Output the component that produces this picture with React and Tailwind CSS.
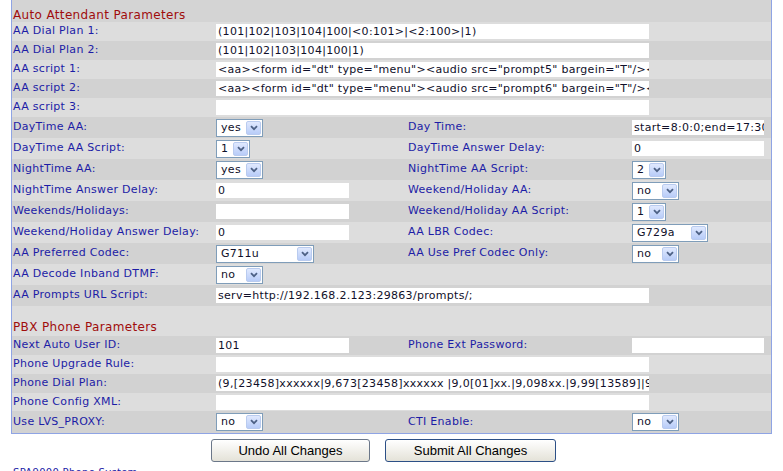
import React from 'react';

const LIGHT = 'bg-[#dddddd]';
const DARK = 'bg-[#d2d2d2]';

const Label = ({ children, right }) => (
    <div className={right ? 'w-[226px] shrink-0 pl-[2px] text-[#1c1ca6]' : 'w-[204px] shrink-0 pl-px text-[#1c1ca6]'}>
        {children}
    </div>
);

const Input = ({ value = '', w = 'w-[133px]' }) => (
    <div className={`h-[15px] ${w} shrink-0 overflow-hidden whitespace-nowrap bg-white pl-[2px] leading-[15px] text-[#10102a]`}>
        {value}
    </div>
);

const Select = ({ value, w }) => (
    <div className={`flex h-[18px] ${w} shrink-0 items-center border border-[#7f9db9] bg-white`}>
        <span className="flex-1 pl-[4px] leading-[16px] text-[#10102a]">{value}</span>
        <span className="mr-px flex h-[14px] w-[15px] items-center justify-center rounded-[2px] border border-[#b9cbef] bg-gradient-to-b from-[#e0e9fe] to-[#b8ccf8]">
            <svg width="8" height="6" viewBox="0 0 8 6">
                <path d="M1 1.2 L4 4.2 L7 1.2" fill="none" stroke="#4d6185" strokeWidth="1.8" />
            </svg>
        </span>
    </div>
);

const Row = ({ h, bg, children }) => (
    <div className={`flex items-center ${h} ${bg}`}>{children}</div>
);

const Cell = ({ children }) => <div className="w-[190px] shrink-0">{children}</div>;

export default function App() {
    return (
        <div className="w-[783px] bg-white font-['DejaVu_Sans','Verdana',sans-serif] text-[11px] tracking-[0.3px]">
            <div className="ml-[11px] w-[761px] border-x border-b border-[#8fa4e4]">
                {/* Auto Attendant section */}
                <div className="flex h-[22px] items-center pt-[7px] pl-px text-[12px] tracking-[0.35px] text-[#a00c0c] bg-[#d4d4d4]">
                    Auto Attendant Parameters
                </div>
                <Row h="h-[19px]" bg={LIGHT}>
                    <Label>AA Dial Plan 1:</Label>
                    <Input w="w-[433px]" value="(101|102|103|104|100|<0:101>|<2:100>|1)" />
                </Row>
                <Row h="h-[19px]" bg={DARK}>
                    <Label>AA Dial Plan 2:</Label>
                    <Input w="w-[433px]" value="(101|102|103|104|100|1)" />
                </Row>
                <Row h="h-[19px]" bg={LIGHT}>
                    <Label>AA script 1:</Label>
                    <Input w="w-[433px]" value={'<aa><form id="dt" type="menu"><audio src="prompt5" bargein="T"/><noinput timeout="10"/>'} />
                </Row>
                <Row h="h-[19px]" bg={DARK}>
                    <Label>AA script 2:</Label>
                    <Input w="w-[433px]" value={'<aa><form id="dt" type="menu"><audio src="prompt6" bargein="T"/><noinput timeout="10"/>'} />
                </Row>
                <Row h="h-[19px]" bg={LIGHT}>
                    <Label>AA script 3:</Label>
                    <Input w="w-[433px]" />
                </Row>

                <Row h="h-[21px]" bg={DARK}>
                    <Label>DayTime AA:</Label>
                    <Cell><Select value="yes" w="w-[47px]" /></Cell>
                    <Label right>Day Time:</Label>
                    <Input w="w-[132px]" value="start=8:0:0;end=17:30:0" />
                </Row>
                <Row h="h-[21px]" bg={LIGHT}>
                    <Label>DayTime AA Script:</Label>
                    <Cell><Select value="1" w="w-[34px]" /></Cell>
                    <Label right>DayTime Answer Delay:</Label>
                    <Input w="w-[132px]" value="0" />
                </Row>
                <Row h="h-[21px]" bg={DARK}>
                    <Label>NightTime AA:</Label>
                    <Cell><Select value="yes" w="w-[47px]" /></Cell>
                    <Label right>NightTime AA Script:</Label>
                    <Select value="2" w="w-[34px]" />
                </Row>
                <Row h="h-[21px]" bg={LIGHT}>
                    <Label>NightTime Answer Delay:</Label>
                    <Cell><Input value="0" /></Cell>
                    <Label right>Weekend/Holiday AA:</Label>
                    <Select value="no" w="w-[47px]" />
                </Row>
                <Row h="h-[21px]" bg={DARK}>
                    <Label>Weekends/Holidays:</Label>
                    <Cell><Input /></Cell>
                    <Label right>Weekend/Holiday AA Script:</Label>
                    <Select value="1" w="w-[34px]" />
                </Row>
                <Row h="h-[21px]" bg={LIGHT}>
                    <Label>Weekend/Holiday Answer Delay:</Label>
                    <Cell><Input value="0" /></Cell>
                    <Label right>AA LBR Codec:</Label>
                    <Select value="G729a" w="w-[76px]" />
                </Row>
                <Row h="h-[21px]" bg={DARK}>
                    <Label>AA Preferred Codec:</Label>
                    <Cell><Select value="G711u" w="w-[98px]" /></Cell>
                    <Label right>AA Use Pref Codec Only:</Label>
                    <Select value="no" w="w-[47px]" />
                </Row>
                <Row h="h-[21px]" bg={LIGHT}>
                    <Label>AA Decode Inband DTMF:</Label>
                    <Cell><Select value="no" w="w-[47px]" /></Cell>
                </Row>
                <Row h="h-[21px]" bg={DARK}>
                    <Label>AA Prompts URL Script:</Label>
                    <Input w="w-[433px]" value="serv=http://192.168.2.123:29863/prompts/;" />
                </Row>

                {/* PBX Phone section */}
                <div className={`h-[12px] ${LIGHT}`} />
                <div className={`flex h-[18px] items-center pl-px text-[12px] tracking-[0.35px] text-[#a00c0c] ${LIGHT}`}>
                    PBX Phone Parameters
                </div>
                <Row h="h-[19px]" bg={DARK}>
                    <Label>Next Auto User ID:</Label>
                    <Cell><Input value="101" /></Cell>
                    <Label right>Phone Ext Password:</Label>
                    <Input w="w-[132px]" />
                </Row>
                <Row h="h-[19px]" bg={LIGHT}>
                    <Label>Phone Upgrade Rule:</Label>
                    <Input w="w-[433px]" />
                </Row>
                <Row h="h-[19px]" bg={DARK}>
                    <Label>Phone Dial Plan:</Label>
                    <Input w="w-[433px]" value="(9,[23458]xxxxxx|9,673[23458]xxxxxx |9,0[01]xx.|9,098xx.|9,99[13589]|9,1xxxxxxxxxx)" />
                </Row>
                <Row h="h-[18px]" bg={LIGHT}>
                    <Label>Phone Config XML:</Label>
                    <Input w="w-[433px]" />
                </Row>
                <Row h="h-[22px]" bg={DARK}>
                    <Label>Use LVS_PROXY:</Label>
                    <Cell><Select value="no" w="w-[47px]" /></Cell>
                    <Label right>CTI Enable:</Label>
                    <Select value="no" w="w-[47px]" />
                </Row>
            </div>

            <div className="ml-[211px] mt-[5px] flex gap-[15px] font-['Liberation_Sans',Arial,sans-serif] text-[13px] tracking-normal text-black">
                <button className="h-[23px] w-[159px] rounded-[3px] border border-[#6b7789] bg-gradient-to-b from-white to-[#e4e2d8]">
                    Undo All Changes
                </button>
                <button className="h-[23px] w-[171px] rounded-[3px] border border-[#2c4f86] bg-gradient-to-b from-white to-[#e4e2d8]">
                    Submit All Changes
                </button>
            </div>
            <div className="mt-[5px] pl-[13px] text-[10px] leading-[12px] text-[#1c1ca6]">SPA9000 Phone System</div>
        </div>
    );
}
